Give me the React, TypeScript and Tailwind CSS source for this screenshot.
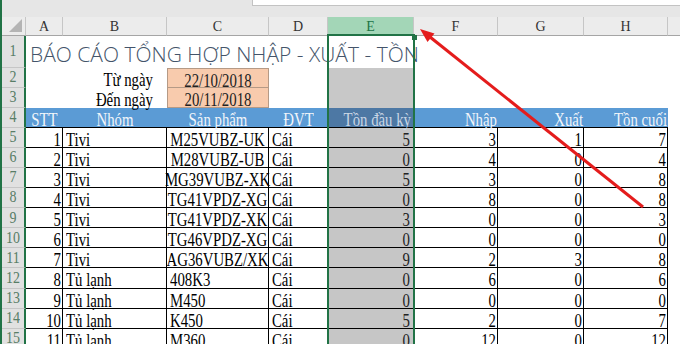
import type { ReactNode } from 'react'

const cols = ['w-[37px]', 'w-[104px]', 'w-[102px]', 'w-[59px]', 'w-[86px]', 'w-[84px]', 'w-[86px]', 'w-[84px]']
const letters = ['A', 'B', 'C', 'D', 'E', 'F', 'G', 'H']

const data: [number, string, string, string, number, number, number, number][] = [
  [1, 'Tivi', 'M25VUBZ-UK', 'Cái', 5, 3, 1, 7],
  [2, 'Tivi', 'M28VUBZ-UB', 'Cái', 0, 4, 0, 4],
  [3, 'Tivi', 'MG39VUBZ-XK', 'Cái', 5, 3, 0, 8],
  [4, 'Tivi', 'TG41VPDZ-XG', 'Cái', 0, 8, 0, 8],
  [5, 'Tivi', 'TG41VPDZ-XK', 'Cái', 3, 0, 0, 3],
  [6, 'Tivi', 'TG46VPDZ-XG', 'Cái', 0, 0, 0, 0],
  [7, 'Tivi', 'AG36VUBZ/XK', 'Cái', 9, 2, 3, 8],
  [8, 'Tủ lạnh', '408K3', 'Cái', 0, 6, 0, 6],
  [9, 'Tủ lạnh', 'M450', 'Cái', 0, 0, 0, 0],
  [10, 'Tủ lạnh', 'K450', 'Cái', 5, 2, 0, 7],
  [11, 'Tủ lạnh', 'M360', 'Cái', 0, 12, 0, 12],
]

type Align = 'l' | 'c' | 'r'

// sheet text is tall and narrow in the screenshot, so stretch it vertically around the baseline
function Cell({ w, align = 'r', className = '', children }: { w: string; align?: Align; className?: string; children?: ReactNode }) {
  const just = align === 'r' ? 'justify-end pr-[1px]' : align === 'c' ? 'justify-center' : 'justify-start pl-[3px]'
  return (
    <div className={`${w} h-full shrink-0 flex items-start ${just} ${className}`}>
      {children != null && (
        <span className="inline-block whitespace-nowrap text-[14.8px] leading-[26px] scale-y-[1.28] origin-[50%_18px]">
          {children}
        </span>
      )}
    </div>
  )
}

function RowHdr({ n }: { n: number }) {
  return (
    <div className="w-[24px] h-full shrink-0 bg-[#e1e1e1] border-r-2 border-r-[#217346] border-b border-b-[#c6c6c6] flex items-center justify-center">
      <span className="inline-block text-[14px] leading-none text-[#587d66] scale-y-[1.15]">{n}</span>
    </div>
  )
}

export default function App() {
  return (
    <div className="relative w-[680px] h-[344px] overflow-hidden bg-white border-l-2 border-[#217346] font-['Liberation_Serif','Times_New_Roman',serif] text-black">
      {/* formula bar edge */}
      <div className="h-[17px] bg-[#e6e6e6] pl-[250px]">
        <div className="h-[6px] bg-white border-l border-b border-[#c3c3c3]" />
      </div>

      {/* column headers */}
      <div className="flex h-[19px] bg-[#ececec]">
        <div className="w-[24px] shrink-0 border-r border-b border-r-[#c6c6c6] border-b-[#a5a5a5] flex items-end justify-end p-[3px]">
          <svg width="13" height="13" viewBox="0 0 13 13">
            <polygon points="13,0 13,13 0,13" fill="#b4b4b4" />
          </svg>
        </div>
        {letters.map((l, i) => (
          <div
            key={l}
            className={`${cols[i]} shrink-0 border-r border-b border-r-[#c6c6c6] text-center text-[14px] leading-[19px] ${
              l === 'E' ? 'bg-[#a3d6b7] text-[#217346] border-b-[#217346]' : 'text-[#333] border-b-[#a5a5a5]'
            }`}
          >
            {l}
          </div>
        ))}
        <div className="flex-1 border-b border-[#a5a5a5]" />
      </div>

      {/* row 1 - title */}
      <div className="flex h-[31.5px]">
        <RowHdr n={1} />
        <div className="flex-1 pl-[4px] pt-[5px]">
          <span className="inline-block whitespace-nowrap font-['Open_Sans',sans-serif] font-light text-[21px] leading-[26px] text-[#44546a]">
            BÁO CÁO TỔNG HỢP NHẬP - XUẤT - TỒN
          </span>
        </div>
      </div>

      {/* rows 2-3 - date range */}
      {[
        ['Từ ngày', '22/10/2018', 'border-t'],
        ['Đến ngày', '20/11/2018', ''],
      ].map(([label, date, top], i) => (
        <div key={label} className="flex h-[20px]">
          <RowHdr n={i + 2} />
          <Cell w={cols[0]} />
          <Cell w={cols[1]} className="pr-[14px]">{label}</Cell>
          <Cell w={cols[2]} align="c" className={`bg-[#f8cbad] border-x border-b border-[#b59a86] text-[#222] ${top}`}>
            {date}
          </Cell>
          <Cell w={cols[3]} />
          <Cell w={cols[4]} className="bg-[#c8c8c8]" />
          <div className="flex-1" />
        </div>
      ))}

      {/* row 4 - table header */}
      <div className="flex h-[20px] text-[#f1f5fa]">
        <RowHdr n={4} />
        <Cell w={cols[0]} align="c" className="bg-[#5b9bd5] border-b border-black">STT</Cell>
        <Cell w={cols[1]} align="c" className="bg-[#5b9bd5] border-b border-black">Nhóm</Cell>
        <Cell w={cols[2]} align="c" className="bg-[#5b9bd5] border-b border-black">Sản phẩm</Cell>
        <Cell w={cols[3]} align="c" className="bg-[#5b9bd5] border-b border-black">ĐVT</Cell>
        <Cell w={cols[4]} className="bg-[#4d78a4] border-b border-black text-[#c9d6e5] pr-[3px]">Tồn đầu kỳ</Cell>
        <Cell w={cols[5]} className="bg-[#5b9bd5] border-b border-black">Nhập</Cell>
        <Cell w={cols[6]} className="bg-[#5b9bd5] border-b border-black">Xuất</Cell>
        <Cell w={cols[7]} className="bg-[#5b9bd5] border-b border-black">Tồn cuối</Cell>
        <div className="flex-1" />
      </div>

      {/* data rows */}
      {data.map((r, i) => (
        <div key={r[0]} className="flex h-[20.15px]">
          <RowHdr n={i + 5} />
          <Cell w={cols[0]} className="border-r border-b border-black">{r[0]}</Cell>
          <Cell w={cols[1]} align="l" className="border-r border-b border-black">{r[1]}</Cell>
          <Cell w={cols[2]} align={i < 7 ? 'c' : 'l'} className="border-r border-b border-black">
            {r[2]}
          </Cell>
          <Cell w={cols[3]} align="l" className="border-r border-b border-black">{r[3]}</Cell>
          <Cell w={cols[4]} className="bg-[#c6c6c6] border-r border-b border-black text-[#222] pr-[3px]">{r[4]}</Cell>
          <Cell w={cols[5]} className="border-r border-b border-black">{r[5]}</Cell>
          <Cell w={cols[6]} className="border-r border-b border-black">{r[6]}</Cell>
          <Cell w={cols[7]} className="border-r border-b border-black">{r[7]}</Cell>
          <div className="flex-1" />
        </div>
      ))}

      {/* selected column E */}
      <div className="absolute left-[325px] top-[34px] bottom-0 w-[88px] border-t-2 border-x-2 border-[#217346] pointer-events-none" />
      <div className="absolute left-[410px] top-[35px] w-[5px] h-[5px] bg-[#217346]" />

      {/* red arrow annotation */}
      <svg className="absolute left-[-2px] top-0 pointer-events-none" width="680" height="344" viewBox="0 0 680 344">
        <line x1="643" y1="207" x2="430" y2="37" stroke="#e41c1c" strokeWidth="3" />
        <polygon points="420,29 427.5,42 434.5,33.5" fill="#e41c1c" />
      </svg>
    </div>
  )
}
